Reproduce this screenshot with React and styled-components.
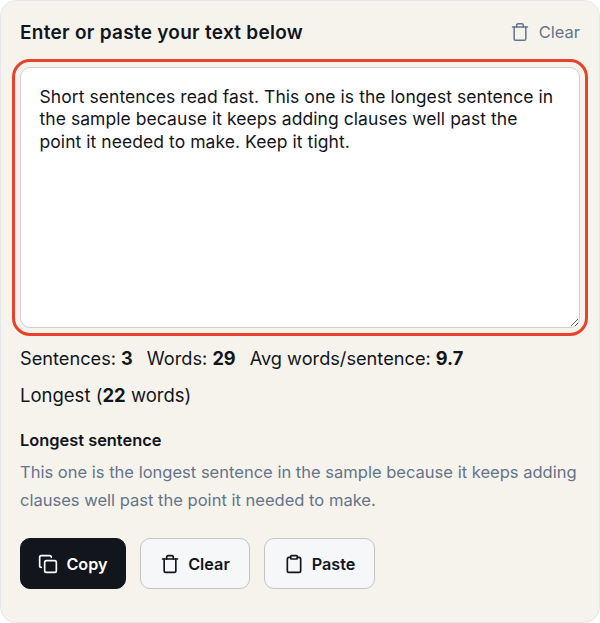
import React from 'react'
import styled, { createGlobalStyle } from 'styled-components'
import { Copy, Trash, Clipboard } from 'lucide-react'

const sample = 'Short sentences read fast. This one is the longest sentence in the sample because it keeps adding clauses well past the point it needed to make. Keep it tight.'

const GlobalStyle = createGlobalStyle`
  html, body {
    margin: 0;
    padding: 0;
    background: #ffffff;
  }
  body, button, textarea {
    font-family: Inter, "Noto Sans", sans-serif;
  }
`

const Card = styled.section`
  box-sizing: border-box;
  width: 600px;
  height: 623px;
  padding: 20px 19px 33px;
  background: #f6f3ec;
  border: 1px solid #e4e6ea;
  border-radius: 16px;
  color: #12151c;
`

const Header = styled.header`
  display: flex;
  align-items: center;
  justify-content: space-between;
  height: 22px;
  margin-bottom: 24px;
`

const Title = styled.h2`
  margin: 0;
  font-size: 19px;
  font-weight: 600;
  letter-spacing: 0.28px;
`

const GhostButton = styled.button`
  display: flex;
  align-items: center;
  gap: 9px;
  padding: 0;
  border: 0;
  background: none;
  color: #64748b;
  font-size: 16.5px;
`

const Editor = styled.textarea`
  display: block;
  box-sizing: border-box;
  width: 560px;
  height: 261px;
  padding: 18px 18.5px;
  background: #fff;
  border: 1.5px solid #cfcfcf;
  border-radius: 10px;
  outline: 3px solid #e8412c;
  outline-offset: 5px;
  color: #12151c;
  font-size: 17.5px;
  letter-spacing: 0.06px;
  line-height: 22.4px;
`

const Stats = styled.div`
  display: flex;
  gap: 14px;
  margin-top: 18px;
  font-size: 18.2px;
  line-height: 24px;
`

const Longest = styled.div`
  margin-top: 13px;
  font-size: 18.5px;
  line-height: 24px;
`

const Label = styled.h3`
  margin: 21px 0 0;
  font-size: 16.4px;
  font-weight: 600;
  line-height: 24px;
`

const Quote = styled.p`
  margin: 6px 0 0;
  color: #64748b;
  font-size: 16.55px;
  line-height: 28px;
`

const Actions = styled.div`
  display: flex;
  gap: 14px;
  margin-top: 24px;
`

const ActionButton = styled.button`
  display: flex;
  align-items: center;
  justify-content: center;
  gap: 8px;
  box-sizing: border-box;
  width: ${(p) => p.$width}px;
  height: 51px;
  background: ${(p) => (p.$primary ? '#12151c' : '#f6f7f9')};
  border: 1px solid ${(p) => (p.$primary ? '#12151c' : '#c4c4c4')};
  border-radius: 10px;
  color: ${(p) => (p.$primary ? '#ffffff' : '#12151c')};
  font-size: 16.2px;
  font-weight: 600;
`

export default function App() {
  return (
    <>
      <GlobalStyle />
      <Card>
        <Header>
          <Title>Enter or paste your text below</Title>
          <GhostButton>
            <Trash size={20} strokeWidth={1.8} />
            Clear
          </GhostButton>
        </Header>
        <Editor defaultValue={sample} spellCheck={false} />
        <Stats>
          <span>Sentences: <b>3</b></span>
          <span>Words: <b>29</b></span>
          <span>Avg words/sentence: <b>9.7</b></span>
        </Stats>
        <Longest>Longest (<b>22</b> words)</Longest>
        <Label>Longest sentence</Label>
        <Quote>This one is the longest sentence in the sample because it keeps adding clauses well past the point it needed to make.</Quote>
        <Actions>
          <ActionButton $primary $width={106}>
            <Copy size={20} strokeWidth={2} />
            Copy
          </ActionButton>
          <ActionButton $width={110}>
            <Trash size={20} strokeWidth={2} />
            Clear
          </ActionButton>
          <ActionButton $width={111}>
            <Clipboard size={20} strokeWidth={2} />
            Paste
          </ActionButton>
        </Actions>
      </Card>
    </>
  )
}
